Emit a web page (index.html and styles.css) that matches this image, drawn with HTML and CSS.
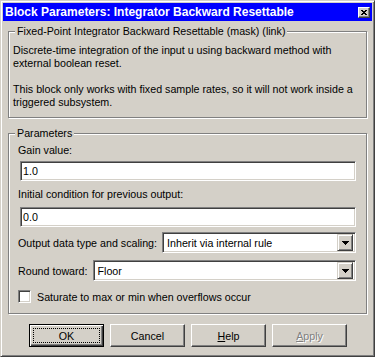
FILE: index.html
```html
<!DOCTYPE html>
<html>
<head>
<meta charset="utf-8">
<title>Block Parameters</title>
<link rel="stylesheet" href="styles.css">
</head>
<body>
<div class="window">
  <div class="titlebar">
    <span class="title">Block Parameters: Integrator Backward Resettable</span>
    <span class="close"><svg width="6" height="5" viewBox="0 0 6 5"><path d="M0 0h2v1H0zM4 0h2v1H4zM1 1h4v1H1zM2 2h2v1H2zM1 3h4v1H1zM0 4h2v1H0zM4 4h2v1H4z"/></svg></span>
  </div>
  <div class="content">
    <div class="group desc">
      <span class="legend">Fixed-Point Integrator Backward Resettable (mask) (link)</span>
      <p>Discrete-time integration of the input u using backward method with<br>external boolean reset.</p>
      <p>This block only works with fixed sample rates, so it will not work inside a<br>triggered subsystem.</p>
    </div>
    <div class="group params">
      <span class="legend">Parameters</span>
      <div class="label first">Gain value:</div>
      <div class="field">1.0</div>
      <div class="label second">Initial condition for previous output:</div>
      <div class="field">0.0</div>
      <div class="row row-output">
        <span class="row-label">Output data type and scaling:</span>
        <div class="select"><span class="select-text">Inherit via internal rule</span><span class="drop"><svg width="7" height="4" viewBox="0 0 7 4"><path d="M0 0h7v1H0zM1 1h5v1H1zM2 2h3v1H2zM3 3h1v1H3z"/></svg></span></div>
      </div>
      <div class="row row-round">
        <span class="row-label">Round toward:</span>
        <div class="select"><span class="select-text">Floor</span><span class="drop"><svg width="7" height="4" viewBox="0 0 7 4"><path d="M0 0h7v1H0zM1 1h5v1H1zM2 2h3v1H2zM3 3h1v1H3z"/></svg></span></div>
      </div>
      <div class="check-row">
        <span class="checkbox"></span>
        <span>Saturate to max or min when overflows occur</span>
      </div>
    </div>
    <div class="buttons">
      <div class="btn default"><span class="focus">OK</span></div>
      <div class="btn">Cancel</div>
      <div class="btn"><span><u>H</u>elp</span></div>
      <div class="btn disabled"><span><u>A</u>pply</span></div>
    </div>
  </div>
</div>
</body>
</html>
```

FILE: styles.css
```css
html, body {
  margin: 0;
  padding: 0;
  background: #d4d0c8;
}

body {
  font-family: "Liberation Sans", Arial, sans-serif;
  font-size: 10.7px;
  color: #000;
}

.window {
  width: 375px;
  height: 357px;
  box-sizing: border-box;
  border: 1px solid;
  border-color: #d4d0c8 #404040 #404040 #d4d0c8;
  box-shadow: inset 1px 1px #fff, inset -1px -1px #808080;
  padding: 2px;
  background: #d4d0c8;
  display: flex;
  flex-direction: column;
}

.titlebar {
  height: 18px;
  background: #0000ff;
  color: #fff;
  display: flex;
  align-items: center;
  justify-content: space-between;
  padding: 0 2px;
}

.title {
  font-weight: bold;
  font-size: 12px;
  white-space: nowrap;
}

.close {
  width: 12px;
  height: 11px;
  box-sizing: border-box;
  background: #d4d0c8;
  border: 1px solid;
  border-color: #fff #404040 #404040 #fff;
  box-shadow: inset -1px -1px #808080;
  display: flex;
  align-items: center;
  justify-content: center;
  padding-right: 1px;
}

.close svg, .drop svg {
  display: block;
  fill: #000;
  shape-rendering: crispEdges;
}

.content {
  padding: 0 5px;
  display: flex;
  flex-direction: column;
}

.group {
  position: relative;
  border: 1px solid #808080;
  box-shadow: inset 1px 1px #fff, 1px 1px #fff;
}

.legend {
  position: absolute;
  top: -7px;
  left: 6px;
  padding: 0 2px;
  line-height: 13px;
  background: #d4d0c8;
  white-space: nowrap;
}

.desc {
  margin-top: 10px;
  padding: 12px 4px 8px;
}

.desc p {
  margin: 0 0 13px;
  line-height: 13px;
  white-space: nowrap;
}

.desc p:last-child {
  margin-bottom: 0;
}

.params {
  margin-top: 15px;
  padding: 9px 10px 10px 9px;
}

.label {
  line-height: 14px;
  white-space: nowrap;
}

.label.first {
  margin-bottom: 4px;
}

.label.second {
  margin-top: 6px;
  margin-bottom: 6px;
}

.field {
  height: 20px;
  margin-left: 2px;
  box-sizing: border-box;
  background: #fff;
  border: 1px solid;
  border-color: #808080 #fff #fff #808080;
  box-shadow: inset 1px 1px #404040, inset -1px -1px #d4d0c8;
  padding: 0 2px;
  display: flex;
  align-items: center;
}

.row {
  display: flex;
  align-items: center;
  gap: 5px;
}

.row-output {
  margin-top: 5px;
}

.row-round {
  margin-top: 7px;
}

.row-label {
  white-space: nowrap;
}

.select {
  flex: 1;
  height: 21px;
  box-sizing: border-box;
  background: #fff;
  border: 1px solid;
  border-color: #808080 #fff #fff #808080;
  box-shadow: inset 1px 1px #404040, inset -1px -1px #d4d0c8;
  padding: 2px 2px 2px 4px;
  display: flex;
  align-items: center;
}

.select-text {
  flex: 1;
  white-space: nowrap;
}

.drop {
  width: 16px;
  height: 17px;
  box-sizing: border-box;
  background: #d4d0c8;
  border: 1px solid;
  border-color: #d4d0c8 #404040 #404040 #d4d0c8;
  box-shadow: inset 1px 1px #fff, inset -1px -1px #808080;
  display: flex;
  align-items: center;
  justify-content: center;
}

.check-row {
  margin-top: 9px;
  height: 13px;
  display: flex;
  align-items: center;
  gap: 6px;
  white-space: nowrap;
}

.checkbox {
  width: 13px;
  height: 13px;
  box-sizing: border-box;
  background: #fff;
  border: 1px solid;
  border-color: #808080 #fff #fff #808080;
  box-shadow: inset 1px 1px #404040, inset -1px -1px #d4d0c8;
}

.buttons {
  margin-top: 10px;
  display: flex;
  justify-content: center;
  gap: 6px;
  padding-left: 1px;
}

.btn {
  width: 75px;
  height: 23px;
  box-sizing: border-box;
  border: 1px solid;
  border-color: #fff #404040 #404040 #fff;
  box-shadow: inset -1px -1px #808080;
  display: flex;
  align-items: center;
  justify-content: center;
  white-space: nowrap;
}

.btn.default {
  border: 1px solid #000;
  box-shadow: inset 1px 1px #fff, inset -1px -1px #404040, inset -2px -2px #808080;
  padding: 3px;
}

.focus {
  flex: 1;
  align-self: stretch;
  border: 1px dotted #000;
  display: flex;
  align-items: center;
  justify-content: center;
}

.btn.disabled {
  color: #808080;
  text-shadow: 1px 1px #fff;
}

u {
  text-decoration: underline;
}
```
